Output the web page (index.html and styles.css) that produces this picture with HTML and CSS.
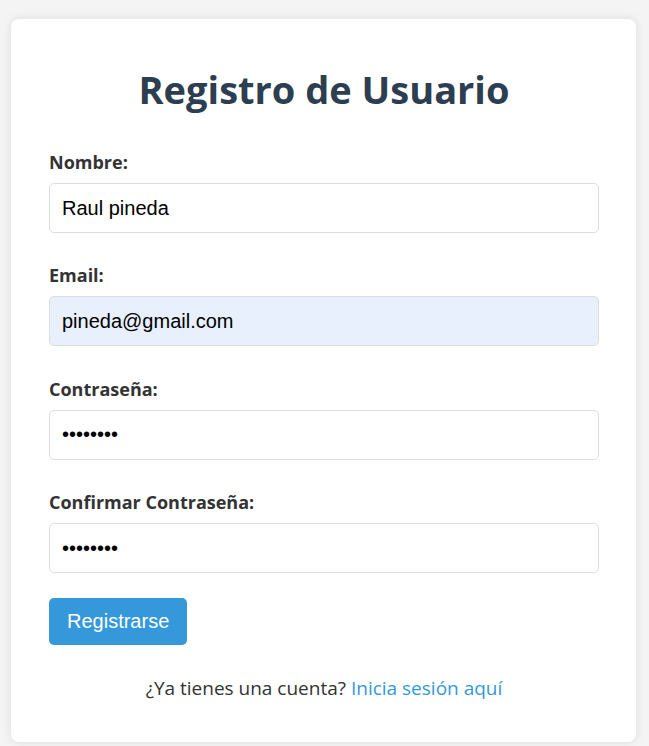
FILE: index.html
```html
<!DOCTYPE html>
<html lang="es">
<head>
<meta charset="utf-8">
<title>Registro de Usuario</title>
<link rel="stylesheet" href="styles.css">
</head>
<body>
<div class="card">
  <h1 class="title">Registro de Usuario</h1>
  <form class="form">
    <div class="group">
      <label class="label" for="nombre">Nombre:</label>
      <input class="input" id="nombre" type="text" value="Raul pineda">
    </div>
    <div class="group">
      <label class="label" for="email">Email:</label>
      <input class="input input-filled" id="email" type="email" value="pineda@gmail.com">
    </div>
    <div class="group">
      <label class="label" for="pass">Contraseña:</label>
      <input class="input" id="pass" type="password" value="12345678">
    </div>
    <div class="group">
      <label class="label" for="pass2">Confirmar Contraseña:</label>
      <input class="input" id="pass2" type="password" value="12345678">
    </div>
    <button class="btn" type="button">Registrarse</button>
  </form>
  <p class="footer">¿Ya tienes una cuenta? <a class="link" href="#">Inicia sesión aquí</a></p>
</div>
</body>
</html>
```
FILE: styles.css
```css
html, body {
  margin: 0;
  padding: 0;
}
body {
  background: #f4f4f4;
  font-family: "Open Sans", Lato, sans-serif;
  color: #333;
  padding: 19px 13px 20px 11px;
}
.card {
  background: #fff;
  border-radius: 8px;
  box-shadow: 0 0 10px rgba(0, 0, 0, 0.1);
  padding: 47px 37px 43px 38px;
}
.title {
  margin: 0 0 39px;
  text-align: center;
  font-size: 38px;
  font-weight: 700;
  color: #2c3e50;
  line-height: 46px;
}
.form {
  display: flex;
  flex-direction: column;
  align-items: flex-start;
}
.group {
  width: 100%;
  margin-bottom: 31.4px;
}
.label {
  display: block;
  font-size: 18px;
  font-weight: 700;
  line-height: 22px;
  margin-bottom: 10px;
}
.input {
  display: block;
  width: 100%;
  box-sizing: border-box;
  height: 50px;
  padding: 12px;
  font-family: "Liberation Sans", Arial, sans-serif;
  font-size: 20px;
  color: #000;
  border: 1px solid #ddd;
  border-radius: 5px;
  background: #fff;
  outline: none;
}
.input-filled {
  background: #e8f0fe;
}
.btn {
  margin-top: -6.4px;
  height: 47px;
  padding: 0 18px;
  background: #3498db;
  color: #fff;
  border: none;
  border-radius: 5px;
  font-family: "Liberation Sans", Arial, sans-serif;
  font-size: 20px;
}
.footer {
  margin: 32px 0 0;
  text-align: center;
  font-size: 19px;
  line-height: 22px;
}
.link {
  color: #3498db;
  text-decoration: none;
}
```
